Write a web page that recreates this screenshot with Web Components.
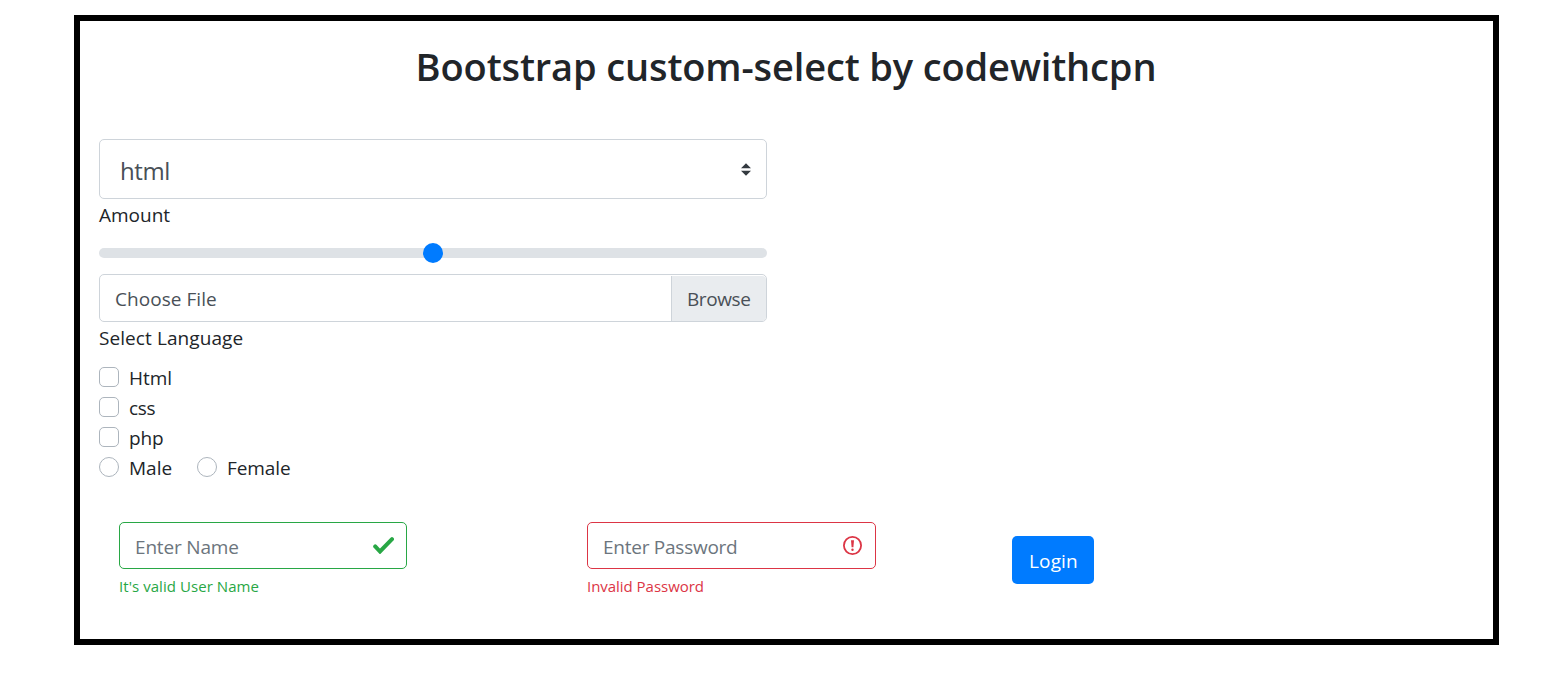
<!DOCTYPE html>
<html lang="en"><head><meta charset="utf-8"><title>Bootstrap custom-select</title>
<style>body{margin:0;background:#fff}</style></head><body>
<login-page></login-page>
<script>
const define=(name,html)=>{const t=document.createElement('template');t.innerHTML=html;
 customElements.define(name,class extends HTMLElement{constructor(){super();this.attachShadow({mode:'open'}).append(t.content.cloneNode(true));}});};

define('ui-text',`<style>:host{display:block;white-space:nowrap;line-height:30px}</style><slot></slot>`);
define('custom-select',`<style>:host{display:flex;box-sizing:border-box;height:60px;border:1px solid #ced4da;border-radius:5px;align-items:center;justify-content:space-between;padding:3px 15px 0 20px;color:#495057}
svg{display:block;margin-top:-3px}</style><slot></slot><svg width="10" height="13" viewBox="0 0 4 5"><path fill="#343a40" d="M2 0L0 2h4zm0 5L0 3h4z"/></svg>`);
define('custom-range',`<style>:host{display:flex;height:20px;align-items:center}
.track{flex:1;height:10px;border-radius:5px;background:#dee2e6;display:flex;align-items:center;justify-content:center}
.thumb{width:20px;height:20px;flex:none;border-radius:50%;background:#007bff}</style><div class="track"><div class="thumb"></div></div>`);
define('custom-file',`<style>:host{display:flex;box-sizing:border-box;height:48px;border:1px solid #ced4da;border-radius:5px;color:#495057;justify-content:space-between}
.name{padding:9px 0 0 15px}.btn{box-sizing:border-box;width:95px;margin-top:1px;padding:8px 0 0 15px;border-left:1px solid #ced4da;background:#e9ecef;border-radius:0 4px 4px 0}</style>
<div class="name"><slot></slot></div><div class="btn"><slot name="button"></slot></div>`);
define('custom-check',`<style>:host{display:flex;height:30px}
.box{box-sizing:border-box;width:20px;height:20px;margin:5px 10px 0 0;border:1px solid #adb5bd;border-radius:5px;background:#fff}
:host([radio]) .box{border-radius:50%}.t{padding-top:1px}</style><div class="box"></div><div class="t"><slot></slot></div>`);
define('form-input',`<style>:host{display:block}
.box{display:flex;box-sizing:border-box;height:47px;border:1px solid var(--c);border-radius:5px;justify-content:space-between;padding:9px 12px 0 15px;color:#6c757d}
.msg{color:var(--c);padding-top:2px}</style><div class="box"><slot></slot><slot name="icon"></slot></div><div class="msg"><slot name="message"></slot></div>`);
define('icon-check',`<style>:host{display:block;margin:5px 0 0}svg{display:block}</style><svg width="21" height="17" viewBox="0 0 21 17"><path d="M2.2 9.4L7 14.5 19 2.2" fill="none" stroke="#28a745" stroke-width="4" stroke-linecap="round" stroke-linejoin="miter"/></svg>`);
define('icon-alert',`<style>:host{display:block;margin:4px 1px 0}svg{display:block}</style><svg width="19" height="19" viewBox="0 0 19 19"><circle cx="9.5" cy="9.5" r="8.6" fill="none" stroke="#dc3545" stroke-width="1.8"/><path d="M8 4.2h3l-.6 7H8.6z" fill="#dc3545"/><circle cx="9.5" cy="13.7" r="1.2" fill="#dc3545"/></svg>`);
define('login-page',`<style>
:host{display:block;box-sizing:border-box;width:1425px;height:630px;margin:15px 0 0 74px;border:6px solid #000;padding:15px 19px 0;font:19px/30px "Open Sans","Noto Sans",sans-serif;color:#212529;background:#fff}
.title{line-height:60px;height:60px;font-size:38px;font-weight:600;letter-spacing:-.13px;text-align:center;margin-right:1px}
.form{width:668px;margin-top:43px}
custom-range{margin:13px 0 11px}
.lang{margin:1px 0 9px;letter-spacing:.08px}
.radios{display:flex}
.radios custom-check:first-child{width:98px}
.row{display:flex;margin:40px 0 0 20px}
.row form-input:first-child{width:288px;margin-right:180px}.row form-input:nth-child(2){width:289px}
.small{font-size:15px;line-height:30px}
.login{box-sizing:border-box;width:82px;height:48px;margin:14px 0 0 136px;padding:10px 0 0 17px;background:#007bff;border-radius:5px;color:#fff}
</style>
<ui-text class="title">Bootstrap custom-select by codewithcpn</ui-text>
<div class="form">
<custom-select><ui-text style="font-size:24px;letter-spacing:-.4px">html</ui-text></custom-select>
<ui-text style="margin-top:1px">Amount</ui-text>
<custom-range></custom-range>
<custom-file><ui-text style="letter-spacing:.05px">Choose File</ui-text><ui-text slot="button" style="letter-spacing:-.4px">Browse</ui-text></custom-file>
<ui-text class="lang">Select Language</ui-text>
<custom-check><ui-text>Html</ui-text></custom-check>
<custom-check><ui-text style="letter-spacing:-.3px">css</ui-text></custom-check>
<custom-check><ui-text style="letter-spacing:-.2px">php</ui-text></custom-check>
<div class="radios"><custom-check radio><ui-text>Male</ui-text></custom-check><custom-check radio><ui-text style="letter-spacing:-.1px">Female</ui-text></custom-check></div>
</div>
<div class="row">
<form-input style="--c:#28a745"><ui-text style="letter-spacing:-.17px">Enter Name</ui-text><icon-check slot="icon"></icon-check><ui-text slot="message" class="small" style="letter-spacing:.06px">It's valid User Name</ui-text></form-input>
<form-input style="--c:#dc3545"><ui-text style="letter-spacing:-.25px">Enter Password</ui-text><icon-alert slot="icon"></icon-alert><ui-text slot="message" class="small" style="letter-spacing:-.03px">Invalid Password</ui-text></form-input>
<div class="login"><ui-text style="letter-spacing:.15px">Login</ui-text></div>
</div>`);
</script></body></html>
